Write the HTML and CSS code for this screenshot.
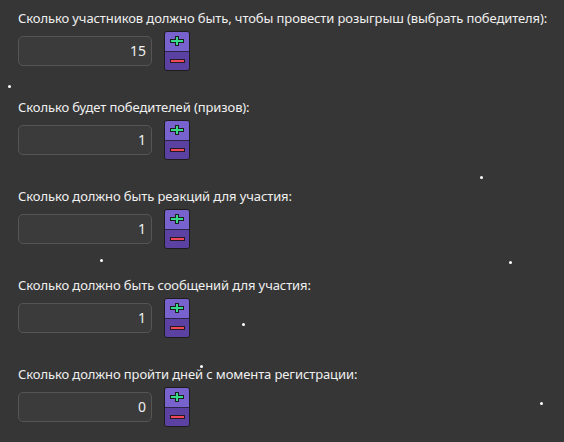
FILE: index.html
```html
<!DOCTYPE html>
<html lang="ru">
  <head>
    <meta charset="UTF-8" />
    <meta name="viewport" content="width=device-width, initial-scale=1.0" />
    <title>Настройки розыгрыша</title>
    <link rel="stylesheet" href="styles.css">
  </head>
  <body>
    <div class="settings">
      <div class="field">
        <label class="field-label">Сколько участников должно быть, чтобы провести розыгрыш (выбрать победителя):</label>
        <div class="field-row">
          <div class="num-box">15</div>
          <div class="stepper">
            <button class="step step-up"><span class="plus"></span></button>
            <button class="step step-down"><span class="minus"></span></button>
          </div>
        </div>
      </div>

      <div class="field">
        <label class="field-label">Сколько будет победителей (призов):</label>
        <div class="field-row">
          <div class="num-box">1</div>
          <div class="stepper">
            <button class="step step-up"><span class="plus"></span></button>
            <button class="step step-down"><span class="minus"></span></button>
          </div>
        </div>
      </div>

      <div class="field">
        <label class="field-label">Сколько должно быть реакций для участия:</label>
        <div class="field-row">
          <div class="num-box">1</div>
          <div class="stepper">
            <button class="step step-up"><span class="plus"></span></button>
            <button class="step step-down"><span class="minus"></span></button>
          </div>
        </div>
      </div>

      <div class="field">
        <label class="field-label">Сколько должно быть сообщений для участия:</label>
        <div class="field-row">
          <div class="num-box">1</div>
          <div class="stepper">
            <button class="step step-up"><span class="plus"></span></button>
            <button class="step step-down"><span class="minus"></span></button>
          </div>
        </div>
      </div>

      <div class="field">
        <label class="field-label">Сколько должно пройти дней с момента регистрации:</label>
        <div class="field-row">
          <div class="num-box">0</div>
          <div class="stepper">
            <button class="step step-up"><span class="plus"></span></button>
            <button class="step step-down"><span class="minus"></span></button>
          </div>
        </div>
      </div>
    </div>

    <!-- snow -->
    <div class="snow">
      <i class="flake" style="left: 8px; top: 85px"></i>
      <i class="flake" style="left: 480px; top: 176px"></i>
      <i class="flake" style="left: 100px; top: 259px"></i>
      <i class="flake" style="left: 509px; top: 261px"></i>
      <i class="flake" style="left: 242px; top: 323px"></i>
      <i class="flake" style="left: 200px; top: 365px"></i>
      <i class="flake" style="left: 540px; top: 402px"></i>
    </div>
  </body>
</html>
```

FILE: styles.css
```css
body {
  font-family: "Noto Sans", "Open Sans", sans-serif;
  background-color: #363636;
  color: #f0f0f0;
  margin: 0;
  padding: 9px 18px 0;
  height: 442px;
  box-sizing: border-box;
  overflow: hidden;
}

.field {
  height: 89px;
}

.field-label {
  display: block;
  font-size: 13px;
  line-height: 18px;
  letter-spacing: -0.1px;
  white-space: nowrap;
}

.field-row {
  display: flex;
  align-items: center;
  gap: 12px;
  margin-top: 4px;
  height: 40px;
}

.num-box {
  width: 134px;
  height: 30px;
  box-sizing: border-box;
  border: 1px solid #555;
  border-radius: 5px;
  background-color: #3b3b3b;
  font-size: 14px;
  line-height: 28px;
  text-align: right;
  padding-right: 5px;
}

.stepper {
  display: flex;
  flex-direction: column;
  width: 26px;
  height: 40px;
  box-sizing: border-box;
  border: 1px solid #1c1c1c;
  border-radius: 3px;
  overflow: hidden;
}

.step {
  flex: 1;
  border: none;
  padding: 0;
  margin: 0;
  display: flex;
  align-items: center;
  justify-content: center;
  cursor: pointer;
}

.step-up {
  background-color: #7862cd;
  border-bottom: 1px solid #2b2545;
}

.step-down {
  background-color: #5b41a1;
}

.plus {
  position: relative;
  width: 12px;
  height: 8px;
  filter: drop-shadow(1px 0 0 #1b1d1b) drop-shadow(-1px 0 0 #1b1d1b)
    drop-shadow(0 1px 0 #1b1d1b) drop-shadow(0 -1px 0 #1b1d1b);
}

.plus::before,
.plus::after {
  content: "";
  position: absolute;
  background-color: #38d98a;
}

.plus::before {
  left: 0;
  top: 3px;
  width: 12px;
  height: 2px;
}

.plus::after {
  left: 5px;
  top: 0;
  width: 2px;
  height: 8px;
}

.minus {
  width: 13px;
  height: 2px;
  background-color: #f0475c;
  box-shadow: 0 0 0 1px #241b20;
}

.snow {
  position: absolute;
  inset: 0;
  pointer-events: none;
}

.flake {
  position: absolute;
  width: 3px;
  height: 3px;
  border-radius: 50%;
  background-color: #fff;
}
```
